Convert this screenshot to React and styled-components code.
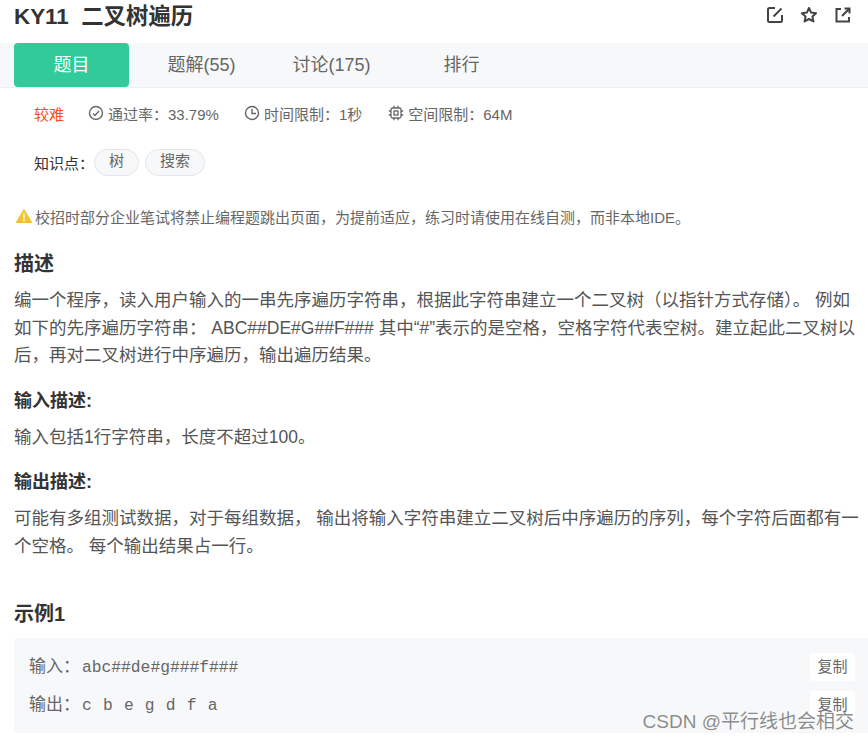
import styled, { createGlobalStyle } from 'styled-components';

const GlobalStyle = createGlobalStyle`
  html, body {
    margin: 0;
    background: #fff;
    overflow: hidden;
  }
  * {
    box-sizing: border-box;
  }
`;

const sans = `"Liberation Sans", "Noto Sans CJK SC", sans-serif`;
const mono = `"Liberation Mono", "Noto Sans CJK SC", monospace`;

const Page = styled.div`
  position: relative;
  width: 868px;
  height: 741px;
  overflow: hidden;
  font-family: ${sans};
  color: #333;
`;

const Header = styled.div`
  height: 43px;
  padding: 0 16px 13px 14px;
  display: flex;
  align-items: center;
  justify-content: space-between;
`;

const Title = styled.h1`
  margin: 3px 0 0;
  font-size: 22.4px;
  line-height: 30px;
  font-weight: bold;
  white-space: pre;
  color: #333;
`;

const Actions = styled.div`
  display: flex;
  gap: 16px;
  svg {
    display: block;
    width: 18px;
    height: 18px;
  }
`;

const Tabs = styled.div`
  height: 45px;
  padding-left: 14px;
  display: flex;
  background: #f7f8f9;
  border-bottom: 1px solid #f0f1f2;
`;

const Tab = styled.div`
  width: 115px;
  margin-right: 15px;
  height: 44px;
  line-height: 44px;
  text-align: center;
  font-size: 18px;
  border-radius: 4px;
  color: ${(p) => (p.$active ? '#fff' : '#666')};
  background: ${(p) => (p.$active ? '#32ca99' : 'transparent')};
`;

const Stats = styled.div`
  height: 52px;
  padding: 0 0 2px 34px;
  display: flex;
  align-items: center;
  font-size: 15px;
  color: #666;
`;

const Level = styled.span`
  color: #fa4b14;
  margin-right: 24px;
`;

const Stat = styled.span`
  display: flex;
  align-items: center;
  gap: 4px;
  margin-right: ${(p) => p.$after || 25}px;
  svg {
    width: 16px;
    height: 16px;
    display: block;
  }
`;

const TagRow = styled.div`
  height: 45px;
  padding-left: 34px;
  display: flex;
  align-items: center;
  font-size: 15px;
  color: #333;
`;

const Tag = styled.span`
  height: 27px;
  line-height: 22px;
  padding: 0 14px;
  margin-right: 6px;
  border: 1px solid #e3e5e8;
  border-radius: 14px;
  background: #f7f8f9;
  color: #666;
`;

const Notice = styled.div`
  margin-top: 19px;
  padding-left: 16px;
  height: 24px;
  display: flex;
  align-items: center;
  gap: 3px;
  font-size: 15px;
  color: #666;
  white-space: nowrap;
`;

const Heading = styled.h2`
  margin: ${(p) => p.$top || 22}px 0 0 14px;
  font-size: ${(p) => p.$size || 20}px;
  line-height: 28px;
  font-weight: bold;
  color: #333;
`;

const Body = styled.p`
  margin: 9px 0 0 14px;
  width: 848px;
  font-size: 17.5px;
  line-height: 27.5px;
  color: #555;
`;

const Example = styled.div`
  margin: 10px 0 0 14px;
  height: 95px;
  border-radius: 4px 0 0 4px;
  background: #f7f8f9;
  padding: 10px 13px 0 15px;
`;

const ExampleRow = styled.div`
  height: 38px;
  display: flex;
  align-items: center;
  justify-content: space-between;
  font-size: 17px;
  color: #666;
`;

const ExampleText = styled.span`
  margin-top: -6px;
`;

const Code = styled.span`
  font-family: ${mono};
  font-size: 16.3px;
  word-spacing: 1.4px;
  margin-left: 2px;
`;

const CopyButton = styled.span`
  width: 45px;
  height: 28px;
  line-height: 28px;
  text-align: center;
  font-size: 15px;
  border-radius: 3px;
  background: #fff;
  color: #666;
`;

const Watermark = styled.div`
  position: absolute;
  right: 14px;
  top: 711px;
  font-size: 19px;
  line-height: 22px;
  color: rgba(120, 120, 120, 0.85);
`;

const iconProps = {
  viewBox: '0 0 18 18',
  fill: 'none',
  stroke: '#444',
  strokeWidth: 2,
};

const EditIcon = () => (
  <svg {...iconProps}>
    <path d="M9 2H3.500a1.500 1.500 0 0 0-1.500 1.500v11a1.500 1.500 0 0 0 1.500 1.500h11a1.500 1.500 0 0 0 1.500-1.500V9" />
    <path d="M7.500 10.500 15.500 2.500" />
  </svg>
);

const StarIcon = () => (
  <svg {...iconProps} strokeLinejoin="round">
    <path d="M9 2l2.100 4.600 5 .6-3.700 3.300 1 4.900L9 13l-4.400 2.400 1-4.900L1.900 7.200l5-.6z" />
  </svg>
);

const ShareIcon = () => (
  <svg {...iconProps}>
    <path d="M7 3H2.500v12.500H15V11" />
    <path d="M8 10l7-7M10.500 2.500h5v5" />
  </svg>
);

const CheckIcon = () => (
  <svg viewBox="0 0 16 16" fill="none" stroke="#666" strokeWidth="1.4">
    <circle cx="8" cy="8" r="6.500" />
    <path d="M5 8.500 7 10.500 11 6" />
  </svg>
);

const ClockIcon = () => (
  <svg viewBox="0 0 16 16" fill="none" stroke="#666" strokeWidth="1.4">
    <circle cx="8" cy="8" r="6.500" />
    <path d="M8 4v4.500h4" />
  </svg>
);

const ChipIcon = () => (
  <svg viewBox="0 0 16 16" fill="none" stroke="#666" strokeWidth="1.300">
    <rect x="3" y="3" width="10" height="10" rx="1.500" />
    <rect x="6" y="6" width="4" height="4" />
    <path d="M6 .8V3M10 .8V3M6 13v2.200M10 13v2.200M.8 6H3M.8 10H3M13 6h2.200M13 10h2.200" />
  </svg>
);

const WarningIcon = () => (
  <svg width="16" height="14" viewBox="0 0 16 14">
    <path d="M8 .5 15.800 13.500H.2z" fill="#f5c232" stroke="#f5c232" strokeLinejoin="round" />
    <path d="M8 4.500v5M8 10.500v1.500" stroke="#fff" strokeWidth="1.500" />
  </svg>
);

const tabs = ['题目', '题解(55)', '讨论(175)', '排行'];

const App = () => {
  return (
    <Page>
      <GlobalStyle />
      <Header>
        <Title>KY11  二叉树遍历</Title>
        <Actions>
          <EditIcon />
          <StarIcon />
          <ShareIcon />
        </Actions>
      </Header>
      <Tabs>
        {tabs.map((tab, i) => (
          <Tab key={tab} $active={i === 0}>
            {tab}
          </Tab>
        ))}
      </Tabs>
      <Stats>
        <Level>较难</Level>
        <Stat>
          <CheckIcon />
          通过率：33.79%
        </Stat>
        <Stat $after={26}>
          <ClockIcon />
          时间限制：1秒
        </Stat>
        <Stat>
          <ChipIcon />
          空间限制：64M
        </Stat>
      </Stats>
      <TagRow>
        知识点：
        <Tag>树</Tag>
        <Tag>搜索</Tag>
      </TagRow>
      <Notice>
        <WarningIcon />
        校招时部分企业笔试将禁止编程题跳出页面，为提前适应，练习时请使用在线自测，而非本地IDE。
      </Notice>
      <Heading>描述</Heading>
      <Body>
        编一个程序，读入用户输入的一串先序遍历字符串，根据此字符串建立一个二叉树（以指针方式存储）。 例如如下的先序遍历字符串： ABC##DE#G##F### 其中“#”表示的是空格，空格字符代表空树。建立起此二叉树以后，再对二叉树进行中序遍历，输出遍历结果。
      </Body>
      <Heading $size={18} $top={17}>输入描述:</Heading>
      <Body>输入包括1行字符串，长度不超过100。</Body>
      <Heading $size={18} $top={17}>输出描述:</Heading>
      <Body>
        可能有多组测试数据，对于每组数据， 输出将输入字符串建立二叉树后中序遍历的序列，每个字符后面都有一个空格。 每个输出结果占一行。
      </Body>
      <Heading $top={40}>示例1</Heading>
      <Example>
        <ExampleRow>
          <ExampleText>
            输入：<Code>abc##de#g###f###</Code>
          </ExampleText>
          <CopyButton>复制</CopyButton>
        </ExampleRow>
        <ExampleRow>
          <ExampleText>
            输出：<Code>c b e g d f a</Code>
          </ExampleText>
          <CopyButton>复制</CopyButton>
        </ExampleRow>
      </Example>
      <Watermark>CSDN @平行线也会相交</Watermark>
    </Page>
  );
};

export default App;
